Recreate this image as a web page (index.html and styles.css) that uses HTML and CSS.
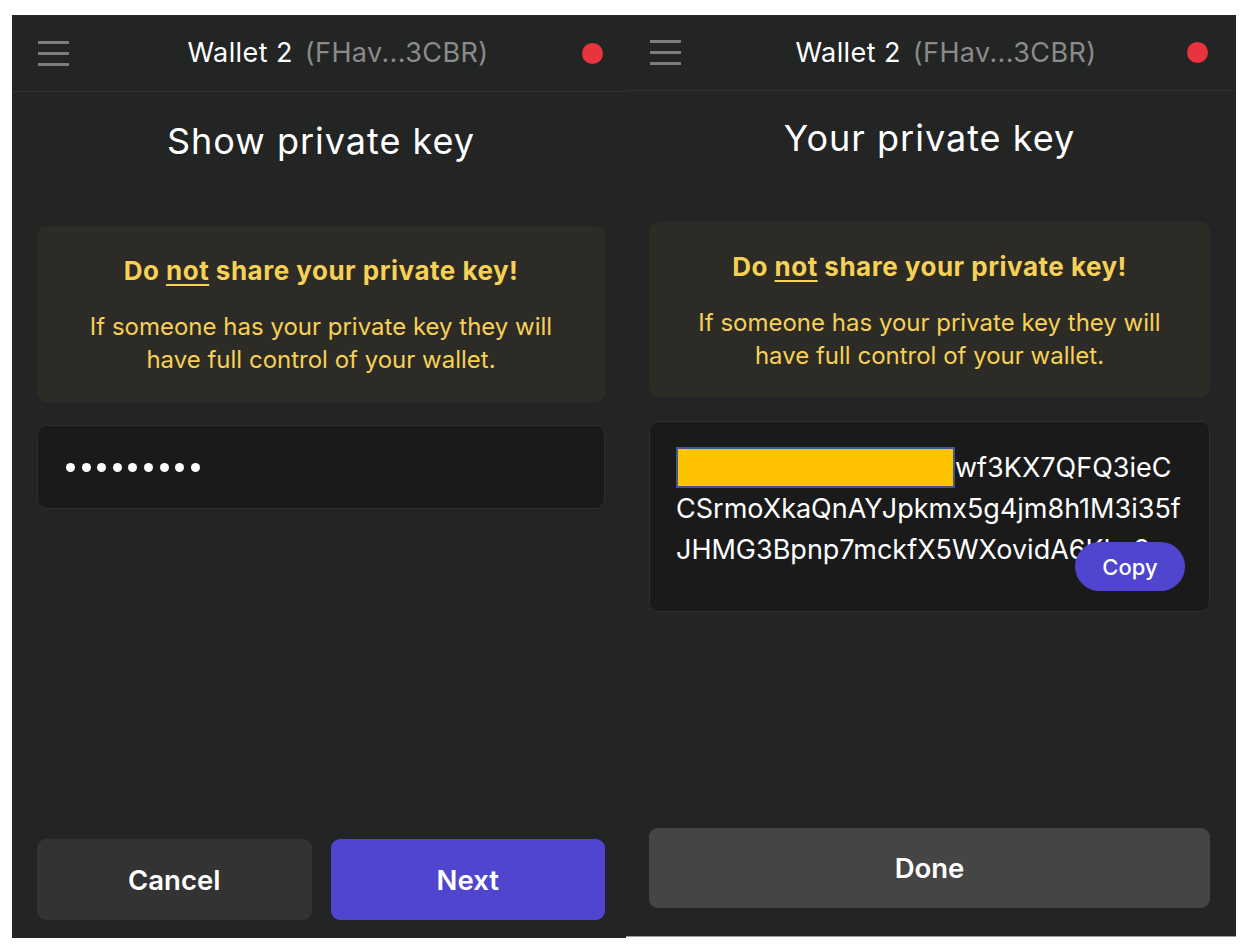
FILE: index.html
```html
<!DOCTYPE html>
<html lang="en">
<head>
<meta charset="utf-8">
<title>Private key</title>
<link rel="stylesheet" href="styles.css">
</head>
<body>
<div class="stage">
  <section class="panel panel-left">
    <header class="topbar">
      <span class="burger"><i></i><i></i><i></i></span>
      <div class="wallet"><span class="wallet-name">Wallet 2</span><span class="wallet-addr">(FHav...3CBR)</span></div>
      <span class="status-dot"></span>
    </header>
    <main class="content">
      <h1 class="title">Show private key</h1>
      <div class="warning">
        <p class="warning-head">Do <u>not</u> share your private key!</p>
        <p class="warning-body">If someone has your private key they will<br>have full control of your wallet.</p>
      </div>
      <div class="password">
        <span class="dot"></span><span class="dot"></span><span class="dot"></span><span class="dot"></span><span class="dot"></span><span class="dot"></span><span class="dot"></span><span class="dot"></span><span class="dot"></span>
      </div>
    </main>
    <footer class="actions">
      <button class="btn btn-secondary">Cancel</button>
      <button class="btn btn-primary">Next</button>
    </footer>
  </section>

  <section class="panel panel-right">
    <header class="topbar">
      <span class="burger"><i></i><i></i><i></i></span>
      <div class="wallet"><span class="wallet-name">Wallet 2</span><span class="wallet-addr">(FHav...3CBR)</span></div>
      <span class="status-dot"></span>
    </header>
    <main class="content">
      <h1 class="title">Your private key</h1>
      <div class="warning">
        <p class="warning-head">Do <u>not</u> share your private key!</p>
        <p class="warning-body">If someone has your private key they will<br>have full control of your wallet.</p>
      </div>
      <div class="keybox">
        <p class="key"><span class="redact"></span>wf3KX7QFQ3ieC<br>CSrmoXkaQnAYJpkmx5g4jm8h1M3i35f<br>JHMG3Bpnp7mckfX5WXovidA6Kkz9</p>
        <button class="copy">Copy</button>
      </div>
    </main>
    <footer class="actions">
      <button class="btn btn-done">Done</button>
    </footer>
  </section>
</div>
</body>
</html>
```
FILE: styles.css
```css
* { box-sizing: border-box; }
html, body { margin: 0; padding: 0; background: #ffffff; }
body { font-family: Inter, "Noto Sans", sans-serif; color: #ffffff; }

.stage {
  display: flex;
  padding: 15px 0 0 12px;
}

.panel {
  display: flex;
  flex-direction: column;
  background: #232424;
}
.panel-left { width: 614px; height: 923px; padding: 0 21px 18px 25px; }
.panel-right { width: 610px; height: 922px; padding: 0 26px 28px 23px; border-bottom: 1px solid #9c9c9c; }

.topbar {
  display: flex;
  align-items: center;
  height: 77px;
  margin: 0 -21px 0 -25px;
  padding: 0 23px 0 26px;
  border-bottom: 1px solid #303131;
}
.panel-right .topbar { height: 76px; margin: 0 -26px 0 -23px; padding: 0 28px 0 24px; }

.burger { display: flex; flex-direction: column; gap: 8px; width: 31px; }
.burger i { display: block; height: 3px; background: #7d7d7d; }

.wallet { flex: 1; text-align: center; padding-left: 25px; font-size: 27px; line-height: 32px; letter-spacing: 0.4px; }
.panel-right .wallet { padding-left: 24px; }
.wallet-name { color: #ffffff; }
.wallet-addr { color: #8b8b8b; margin-left: 12px; }

.status-dot { width: 21px; height: 21px; border-radius: 50%; background: #e8343f; }

.content { display: flex; flex-direction: column; }

.title {
  margin: 28px 0 0;
  font-size: 36px;
  line-height: 42px;
  font-weight: 400;
  letter-spacing: 1px;
  text-align: center;
}
.panel-right .title { margin-top: 26px; }

.warning {
  margin-top: 64px;
  padding: 30px 16px 26px;
  background: #2c2b26;
  border-radius: 9px;
  color: #f7d156;
  text-align: center;
}
.panel-right .warning { margin-top: 63px; padding-bottom: 25px; }
.warning p { margin: 0; }
.warning-head { font-size: 26px; line-height: 30px; font-weight: 700; letter-spacing: 0.5px; }
.warning-head u { text-decoration-thickness: 2px; text-underline-offset: 4px; }
.warning-body { margin-top: 24px !important; font-size: 24px; line-height: 33px; }

.password {
  display: flex;
  align-items: center;
  gap: 6.6px;
  margin-top: 23px;
  height: 84px;
  padding: 0 28px;
  background: #1a1a1a;
  border: 1px solid #2e2f2f;
  border-radius: 9px;
}
.password .dot { width: 9px; height: 9px; border-radius: 50%; background: #ffffff; }

.keybox {
  position: relative;
  margin-top: 24px;
  height: 191px;
  padding: 25px 18px 0 26px;
  background: #1a1a1a;
  border: 1px solid #2e2f2f;
  border-radius: 9px;
}
.key {
  margin: 0;
  font-size: 27px;
  line-height: 41px;
  white-space: nowrap;
  overflow: hidden;
  color: #ffffff;
}
.redact {
  display: inline-block;
  vertical-align: top;
  width: 279px;
  height: 41px;
  background: #ffc200;
  border: 2px solid #3d5a8c;
}
.copy {
  position: absolute;
  right: 24px;
  bottom: 20px;
  width: 110px;
  height: 49px;
  border: none;
  border-radius: 25px;
  background: #5045cf;
  color: #ffffff;
  font-family: Inter, "Noto Sans", sans-serif;
  font-size: 22px;
  font-weight: 500;
}

.actions { margin-top: auto; display: flex; gap: 19px; }
.btn {
  flex: 1;
  height: 81px;
  border: none;
  border-radius: 9px;
  color: #ffffff;
  font-family: Inter, "Noto Sans", sans-serif;
  font-size: 27.5px;
  font-weight: 600;
}
.btn-secondary { background: #333333; }
.btn-primary { background: #5045cf; }
.btn-done { background: #454545; height: 80px; }
```
